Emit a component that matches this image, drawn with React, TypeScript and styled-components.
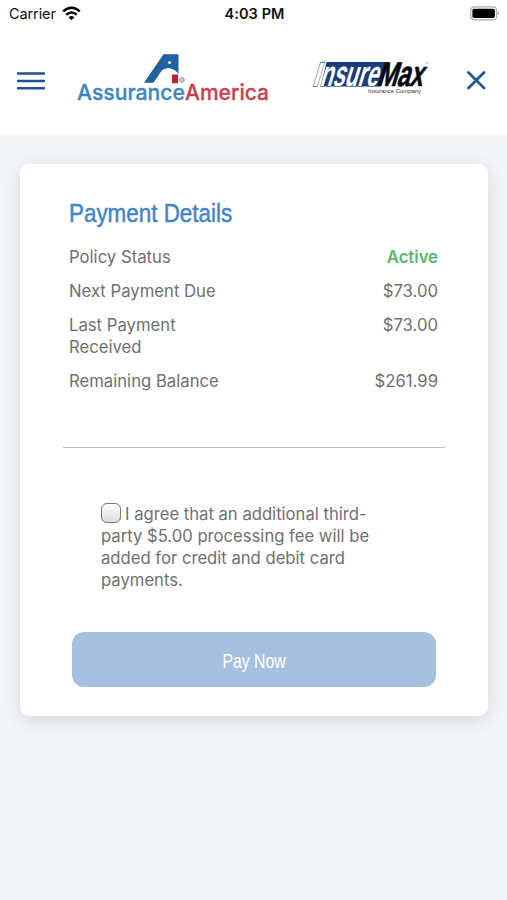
import React from "react";
import styled, { createGlobalStyle } from "styled-components";

const GlobalStyle = createGlobalStyle`
  * { box-sizing: border-box; }
  body {
    margin: 0;
    background: #f3f5f9;
    font-family: Inter, "Liberation Sans", sans-serif;
    color: #707070;
  }
`;

const Screen = styled.div`
  min-height: 900px;
  background: #f3f5f9;
`;

const Top = styled.header`
  height: 135px;
  background: #fff;
`;

const StatusBar = styled.div`
  display: grid;
  grid-template-columns: 1fr auto 1fr;
  align-items: center;
  height: 27px;
  padding: 0 7px 0 9px;
  color: #111;
  font-size: 14.5px;
  line-height: 27px;
`;

const Carrier = styled.div`
  display: flex;
  align-items: center;
  gap: 6px;
  letter-spacing: -0.1px;
`;

const Clock = styled.div`
  font-weight: 600;
  letter-spacing: 0.1px;
`;

const Battery = styled.div`
  display: flex;
  justify-content: flex-end;
`;

const NavBar = styled.nav`
  display: flex;
  align-items: flex-start;
  padding: 21px 20px 0 16px;
`;

const IconButton = styled.button<{ $left?: number; $top: number }>`
  display: flex;
  margin: ${(p) => p.$top}px 0 0 ${(p) => p.$left ?? 0}px;
  padding: 0;
  border: 0;
  background: none;
`;

const Logo = styled.svg<{ $left: number }>`
  display: block;
  flex: none;
  margin-left: ${(p) => p.$left}px;
  overflow: visible;
`;

const Card = styled.main`
  height: 552px;
  margin: 29px 19px 0 20px;
  padding: 34px 43px 0;
  border-radius: 9px;
  background: #fff;
  box-shadow: 0 4px 18px rgba(0, 0, 0, 0.13);
`;

const Title = styled.h1`
  width: max-content;
  margin: 0 0 18px 6px;
  color: #4585c6;
  font-family: "Liberation Sans", sans-serif;
  font-size: 26px;
  font-weight: 400;
  line-height: 30px;
  -webkit-text-stroke: 0.5px #4585c6;
  transform: scaleX(0.862);
  transform-origin: left;
`;

const Details = styled.dl`
  display: flex;
  flex-direction: column;
  gap: 12px;
  height: 202px;
  margin: 0;
  padding: 0 7px 0 6px;
  border-bottom: 1px solid #bfbfbf;
  font-size: 16.7px;
  line-height: 22px;
`;

const Row = styled.div`
  display: flex;
  justify-content: space-between;
`;

const Label = styled.dt`
  max-width: 155px;
`;

const Value = styled.dd<{ $active?: boolean }>`
  margin: 0;
  color: ${(p) => (p.$active ? "#5ab870" : "inherit")};
  font-weight: ${(p) => (p.$active ? 600 : 400)};
`;

const Agreement = styled.label`
  display: block;
  width: 285px;
  margin: 55px 0 0 38px;
  font-size: 16.65px;
  line-height: 22px;
`;

const Checkbox = styled.input`
  appearance: none;
  width: 20px;
  height: 20px;
  margin: 0 4px 0 0;
  border: 1.5px solid #777;
  border-radius: 6px;
  background: linear-gradient(#fff, #dcdcdc);
  vertical-align: -3px;
`;

const PayButton = styled.button`
  display: block;
  width: 364px;
  height: 55px;
  margin: 41px 0 0 9px;
  padding: 3px 0 0;
  border: 0;
  border-radius: 12px;
  background: #a6c1e0;
  color: #fff;
  font-family: "Liberation Sans", sans-serif;
  font-size: 20px;
`;

const PayText = styled.span`
  display: inline-block;
  transform: scaleX(0.79);
`;

const details = [
  { label: "Policy Status", value: "Active", active: true },
  { label: "Next Payment Due", value: "$73.00" },
  { label: "Last Payment Received", value: "$73.00" },
  { label: "Remaining Balance", value: "$261.99" },
];

const WifiIcon = () => (
  <svg width="19" height="15" viewBox="0 0 19 15" fill="none" stroke="#000" strokeWidth="2.5">
    <path d="M1.2 5.4 Q9.5 -2 17.8 5.4" />
    <path d="M4.2 8.7 Q9.5 4.2 14.8 8.7" />
    <path d="M6.6 11.2 Q9.5 8.6 12.4 11.2 L9.5 14.2Z" fill="#000" stroke="none" />
  </svg>
);

const BatteryIcon = () => (
  <svg width="30" height="15" viewBox="0 0 30 15">
    <rect x=".7" y=".9" width="26" height="13" rx="3.8" fill="#fff" stroke="#aaa" strokeWidth="1.2" />
    <rect x="2.4" y="2.7" width="22.5" height="9.4" rx="1.8" />
    <path d="M28 5.2 Q30.2 7.4 28 9.6Z" fill="#999" />
  </svg>
);

const AssuranceLogo = () => (
  <Logo $left={31} width="193" height="56" viewBox="0 0 193 56" aria-label="AssuranceAmerica">
    <path d="M67 34.8 L86.5 6.2 H101.5 V26.5 Q99 20.6 91 20.4 Q86 20.4 83 25 L76.5 34.8Z" fill="#23609f" />
    <circle cx="92.5" cy="14.5" r="1.6" fill="#dbe9f5" />
    <path d="M84 23 Q91 18 97 22 Q100 24 101 27 L91 26Z" fill="#fff" />
    <rect x="95" y="26.5" width="6" height="8.7" fill="#bd2438" />
    <circle cx="105" cy="32" r="2.3" fill="#ccc" stroke="#999" strokeWidth="1" />
    <text y="51.5" fontFamily="Inter, sans-serif" fontSize="21.5" fontWeight="500" strokeWidth=".3">
      <tspan x="0" fill="#3c87c0" stroke="#3c87c0" textLength="108" lengthAdjust="spacingAndGlyphs">Assurance</tspan>
      <tspan x="108" fill="#c64450" stroke="#c64450" textLength="84" lengthAdjust="spacingAndGlyphs">America</tspan>
    </text>
  </Logo>
);

const InsureMaxLogo = () => (
  <Logo $left={41} width="120" height="50" viewBox="0 0 120 50" aria-label="InsureMax Insurance Company">
    <path d="M15.5 14 H76 L68 38.5 H10Z" fill="#173d7b" />
    <g transform="translate(1 38) skewX(-17)" fontFamily="Liberation Sans, sans-serif" fontWeight="700">
      <text fontSize="34" fill="#fff" stroke="#40598c" strokeWidth="1.5" paintOrder="stroke" textLength="6.5" lengthAdjust="spacingAndGlyphs">I</text>
      <text x="7" fontSize="36" fill="#fff" stroke="#33528b" strokeWidth="1.2" paintOrder="stroke" textLength="58" lengthAdjust="spacingAndGlyphs">nsure</text>
      <text x="64.5" fontSize="34" fill="#05080c" stroke="#05080c" strokeWidth=".7" textLength="20" lengthAdjust="spacingAndGlyphs">M</text>
      <text x="84" fontSize="36" fill="#05080c" stroke="#05080c" strokeWidth=".6" textLength="26" lengthAdjust="spacingAndGlyphs">ax</text>
    </g>
    <text x="57" y="45" fontFamily="Liberation Sans, sans-serif" fontSize="6.2" fill="#333" textLength="53" lengthAdjust="spacingAndGlyphs">Insurance Company</text>
    <circle cx="116" cy="15" r=".9" fill="none" stroke="#aaa" strokeWidth=".6" />
  </Logo>
);

export default function App() {
  return (
    <>
      <GlobalStyle />
      <Screen>
        <Top>
          <StatusBar>
            <Carrier>Carrier <WifiIcon /></Carrier>
            <Clock>4:03 PM</Clock>
            <Battery><BatteryIcon /></Battery>
          </StatusBar>
          <NavBar>
            <IconButton $top={24} aria-label="Menu">
              <svg width="30" height="18" viewBox="0 0 30 18" stroke="#1f528e" strokeWidth="2.4" strokeLinecap="round">
                <path d="M2 1.5H28M2 9H28M2 16.2H28" />
              </svg>
            </IconButton>
            <AssuranceLogo />
            <InsureMaxLogo />
            <IconButton $left={36} $top={23} aria-label="Close">
              <svg width="20" height="20" viewBox="0 0 20 20" stroke="#28568e" strokeWidth="2.8" strokeLinecap="round">
                <path d="M1.5 1.5 17 17M17 1.5 1.5 17" />
              </svg>
            </IconButton>
          </NavBar>
        </Top>
        <Card>
          <Title>Payment Details</Title>
          <Details>
            {details.map((item) => (
              <Row key={item.label}>
                <Label>{item.label}</Label>
                <Value $active={item.active}>{item.value}</Value>
              </Row>
            ))}
          </Details>
          <Agreement>
            <Checkbox type="checkbox" />
            I agree that an additional third-party $5.00 processing fee will be added for credit and debit card payments.
          </Agreement>
          <PayButton><PayText>Pay Now</PayText></PayButton>
        </Card>
      </Screen>
    </>
  );
}
